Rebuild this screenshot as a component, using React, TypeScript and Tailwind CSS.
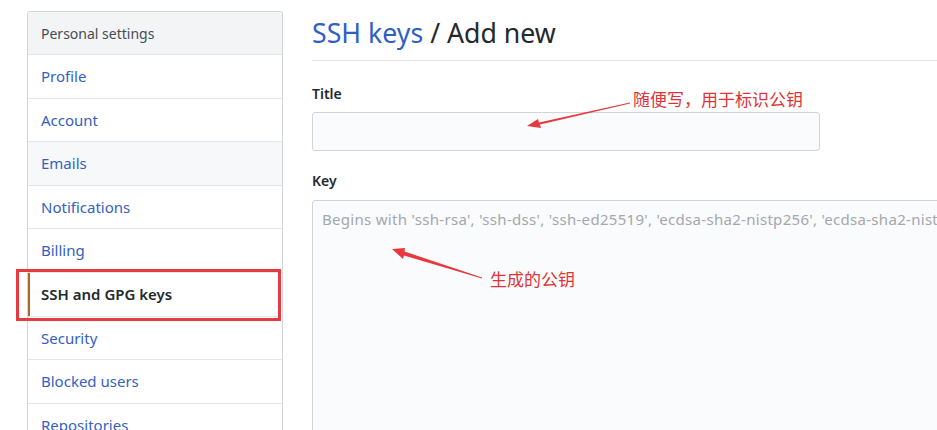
import React from 'react';

const menu = [
  { label: 'Profile' },
  { label: 'Account' },
  { label: 'Emails', hover: true },
  { label: 'Notifications' },
  { label: 'Billing' },
  { label: 'SSH and GPG keys', selected: true },
  { label: 'Security' },
  { label: 'Blocked users' },
  { label: 'Repositories' },
];

function Annotations() {
  return (
    <svg className="absolute inset-0 pointer-events-none" width="937" height="430" viewBox="0 0 937 430">
      {/* title arrow */}
      <polygon points="630,102.5 630,103.5 540,124.5 541,128 527,126 538,119 539,122.5" fill="#e8383d" />
      {/* key arrow */}
      <polygon points="482,277.5 482,278.5 404,255.5 403,259 392,249 405,248 404.5,251.5" fill="#e8383d" />
    </svg>
  );
}

export default function App() {
  return (
    <div
      className="relative w-[937px] h-[430px] overflow-hidden bg-white flex text-[#24292e]"
      style={{ fontFamily: '"Noto Sans", "Noto Sans CJK SC", sans-serif' }}
    >
      <div className="pl-[27px] pt-[11px] w-[283px] shrink-0">
        <nav className="border border-[#d1d5da] rounded-[3px] overflow-hidden">
          <div className="h-[43px] px-[13px] flex items-center bg-[#f3f4f6] text-[14px] text-[#444d56] border-b border-[#e1e4e8]">
            Personal settings
          </div>
          {menu.map((item, i) => (
            <div
              key={i}
              className={`h-[43.6px] flex items-center px-[13px] text-[15px] border-b border-[#e1e4e8] relative ${
                item.hover ? 'bg-[#f6f8fa]' : 'bg-white'
              } ${item.selected ? 'text-[#24292e] font-semibold' : 'text-[#3461c1]'}`}
            >
              {item.selected && <span className="absolute left-0 top-0 bottom-0 w-[2px] bg-[#b5652a]" />}
              {item.label}
            </div>
          ))}
        </nav>
      </div>

      <div className="ml-[29px] w-[680px] shrink-0">
        <div className="h-[61px] border-b border-[#e1e4e8] flex items-center pt-[6px]">
          <h2 className="text-[26.7px] font-normal leading-none">
            <span className="text-[#2f5fc6]">SSH keys</span> / Add new
          </h2>
        </div>
        <div className="pt-[23px]">
          <label className="block text-[14px] font-semibold leading-[20px]">Title</label>
          <div className="mt-[8px] w-[508px] h-[39px] bg-[#fafbfc] border border-[#d1d5da] rounded-[3px]" />
        </div>
        <div className="pt-[20px]">
          <label className="block text-[14px] font-semibold leading-[20px]">Key</label>
          <div className="mt-[9px] w-[680px] h-[300px] bg-[#fafbfc] border border-[#d1d5da] rounded-[3px] px-[9px] pt-[8px]">
            <div className="text-[15px] tracking-[0.3px] text-[#a3a8ad] whitespace-nowrap leading-[21px]">
              Begins with 'ssh-rsa', 'ssh-dss', 'ssh-ed25519', 'ecdsa-sha2-nistp256', 'ecdsa-sha2-nistp384', or 'ecdsa-sha2-nistp521'
            </div>
          </div>
        </div>
      </div>

      <div className="absolute left-[16px] top-[269px] w-[265px] h-[52px] border-[3px] border-[#e53a3f]" />
      <Annotations />
      <div className="absolute left-[633px] top-[88px] text-[17px] leading-[24px] text-[#df3339]">随便写，用于标识公钥</div>
      <div className="absolute left-[490px] top-[268px] text-[17px] leading-[24px] text-[#df3339]">生成的公钥</div>
    </div>
  );
}
